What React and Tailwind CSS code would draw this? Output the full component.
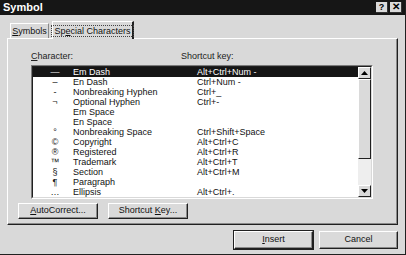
import React from "react";

const rows = [
  ["—", "Em Dash", "Alt+Ctrl+Num -"],
  ["–", "En Dash", "Ctrl+Num -"],
  ["-", "Nonbreaking Hyphen", "Ctrl+_"],
  ["¬", "Optional Hyphen", "Ctrl+-"],
  ["", "Em Space", ""],
  ["", "En Space", ""],
  ["°", "Nonbreaking Space", "Ctrl+Shift+Space"],
  ["©", "Copyright", "Alt+Ctrl+C"],
  ["®", "Registered", "Alt+Ctrl+R"],
  ["™", "Trademark", "Alt+Ctrl+T"],
  ["§", "Section", "Alt+Ctrl+M"],
  ["¶", "Paragraph", ""],
  ["…", "Ellipsis", "Alt+Ctrl+."],
];

function Btn({ children, className = "" }) {
  return (
    <div
      className={
        "flex items-center justify-center whitespace-nowrap border-t border-l border-t-white border-l-white border-r border-b border-r-[#202020] border-b-[#202020] shadow-[inset_-1px_-1px_0_#8a8a8a] bg-[#dadada] text-[9px] text-[#111] " +
        className
      }
    >
      {children}
    </div>
  );
}

function Arrow({ up }) {
  return (
    <div className="w-[13px] h-[12px] flex items-center justify-center bg-[#dadada] border-t border-l border-t-white border-l-white border-r border-b border-r-[#202020] border-b-[#202020]">
      <svg width="7" height="4" viewBox="0 0 7 4">
        {up ? <polygon points="3.5,0 7,4 0,4" fill="#000" /> : <polygon points="0,0 7,0 3.5,4" fill="#000" />}
      </svg>
    </div>
  );
}

export default function App() {
  return (
    <div
      className="w-[406px] h-[255px] bg-[#d9d9d9] flex flex-col border-r border-b border-r-[#202020] border-b-[#202020] overflow-hidden"
      style={{ fontFamily: '"Liberation Sans", Arial, sans-serif' }}
    >
      {/* Title bar */}
      <div className="h-[15px] bg-[#161616] flex items-center justify-between pl-[3px] pr-[3px] shrink-0">
        <span className="text-white font-bold text-[11px] leading-none">Symbol</span>
        <div className="flex gap-[2px]">
          <div className="w-[12px] h-[11px] bg-[#dadada] flex items-center justify-center text-[9px] font-bold leading-none text-black border-r border-b border-r-[#333] border-b-[#333]">?</div>
          <div className="w-[12px] h-[11px] bg-[#dadada] flex items-center justify-center text-[10px] font-bold leading-none text-black border-r border-b border-r-[#333] border-b-[#333]">✕</div>
        </div>
      </div>

      {/* Tabs */}
      <div className="flex items-end gap-[3px] pl-[10px] pt-[5px] h-[23px] shrink-0">
        <div className="h-[16px] w-[39px] flex items-center justify-center whitespace-nowrap text-[9px] text-[#111] border-t border-l border-t-white border-l-white border-r border-r-[#888] mb-[-1px]">
          <span><span className="underline">S</span>ymbols</span>
        </div>
        <div className="h-[18px] w-[82px] flex items-center justify-center whitespace-nowrap text-[9px] text-[#111] bg-[#d9d9d9] border-t border-l border-t-white border-l-white border-r-2 border-r-[#202020] relative z-10 mb-[-1px]">
          <span className="border border-dotted border-[#444] px-[2px] leading-[10px] whitespace-nowrap">
            Sp<span className="underline">e</span>cial Characters
          </span>
        </div>
      </div>

      {/* Panel */}
      <div className="ml-[7px] w-[391px] h-[187px] border-t border-l border-t-white border-l-white border-r border-b border-r-[#202020] border-b-[#202020] shadow-[inset_-1px_-1px_0_#8a8a8a] flex flex-col pl-[23px] pt-[11px] shrink-0">
        <div className="flex text-[9px] text-[#222] h-[15px] items-start">
          <span className="w-[150px]">
            <span className="underline">C</span>haracter:
          </span>
          <span>Shortcut key:</span>
        </div>
        {/* List */}
        <div className="w-[342px] h-[134px] border-t border-l border-t-[#7a7a7a] border-l-[#7a7a7a] border-r border-b border-r-white border-b-white">
          <div className="w-full h-full border-t border-l border-t-[#202020] border-l-[#202020] border-r border-b border-r-[#d9d9d9] border-b-[#d9d9d9] bg-white flex">
            <div className="flex-1 flex flex-col">
              {rows.map((r, i) => (
                <div
                  key={i}
                  className={
                    "h-[10px] flex items-center text-[9px] leading-none whitespace-nowrap " +
                    (i === 0 ? "bg-[#151515] text-white" : "text-[#111]")
                  }
                >
                  <span className="w-[40px] pl-[4px] text-center">{r[0]}</span>
                  <span className="w-[124px]">{r[1]}</span>
                  <span>{r[2]}</span>
                </div>
              ))}
            </div>
            <div className="w-[13px] flex flex-col">
              <Arrow up />
              <div className="h-[80px] bg-[#dadada] border-t border-l border-t-white border-l-white border-r border-b border-r-[#202020] border-b-[#202020]" />
              <div className="flex-1 bg-[#eeeeee]" />
              <Arrow />
            </div>
          </div>
        </div>
        {/* Buttons */}
        <div className="flex gap-[10px] mt-[4px] ml-[-13px]">
          <Btn className="w-[80px] h-[16px]">
            <span><span className="underline">A</span>utoCorrect...</span>
          </Btn>
          <Btn className="w-[80px] h-[16px]">
            <span>Shortcut <span className="underline">K</span>ey...</span>
          </Btn>
        </div>
      </div>

      {/* Bottom buttons */}
      <div className="flex justify-end gap-[6px] pr-[7px] mt-[6px]">
        <Btn className="w-[79px] h-[18px] outline outline-1 outline-[#202020]">
          <span><span className="underline">I</span>nsert</span>
        </Btn>
        <Btn className="w-[79px] h-[18px]">Cancel</Btn>
      </div>
    </div>
  );
}
